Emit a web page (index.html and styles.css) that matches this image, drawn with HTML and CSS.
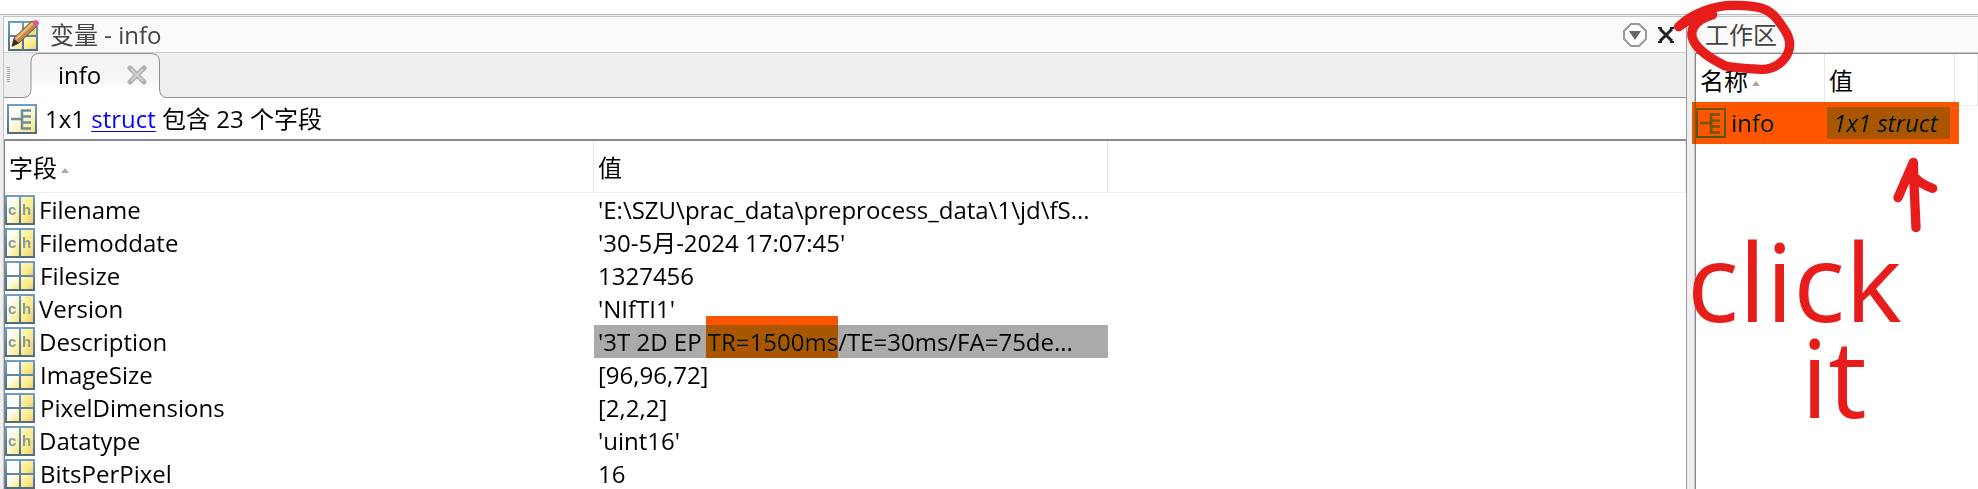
FILE: index.html
```html
<!DOCTYPE html>
<html lang="zh-CN">
<head>
<meta charset="utf-8">
<title>变量 - info</title>
<link rel="stylesheet" href="styles.css">
</head>
<body>
<svg class="defs" aria-hidden="true">
  <defs>
    <linearGradient id="edge" x1="0" y1="0" x2="0" y2="1"><stop offset="0" stop-color="#6f9fc4"/><stop offset="1" stop-color="#4f6b80"/></linearGradient>
    <linearGradient id="pale" x1="0" y1="0" x2="1" y2="1"><stop offset="0" stop-color="#ffffff"/><stop offset=".35" stop-color="#fffef0"/><stop offset="1" stop-color="#f6e67c"/></linearGradient>
    <linearGradient id="gold" x1="0" y1="0" x2="1" y2="1"><stop offset="0" stop-color="#fff9c4"/><stop offset=".6" stop-color="#fbea85"/><stop offset="1" stop-color="#e9cf80"/></linearGradient>
    <linearGradient id="tabfill" x1="0" y1="0" x2="0" y2="1"><stop offset="0" stop-color="#f3f3f6"/><stop offset=".55" stop-color="#f6f6f9"/><stop offset=".8" stop-color="#ffffff"/></linearGradient>
    <linearGradient id="wood" x1="0" y1="0" x2="1" y2="1"><stop offset="0" stop-color="#f5c98a"/><stop offset="1" stop-color="#8a5522"/></linearGradient>
    <symbol id="grid" viewBox="0 0 30 30">
      <rect width="30" height="30" fill="url(#edge)"/>
      <rect x="2" y="2" width="12" height="12" fill="#fff"/>
      <rect x="16" y="2" width="12" height="12" fill="url(#gold)"/>
      <rect x="2" y="16" width="12" height="12" fill="url(#pale)"/>
      <rect x="16" y="16" width="12" height="12" fill="url(#gold)"/>
    </symbol>
    <symbol id="char" viewBox="0 0 30 30">
      <rect width="30" height="30" fill="url(#edge)"/>
      <rect x="2" y="2" width="12" height="26" fill="url(#pale)"/>
      <rect x="16" y="2" width="12" height="26" fill="url(#gold)"/>
      <text x="3" y="20" class="icon-letter">c</text>
      <text x="17" y="20" class="icon-letter">h</text>
    </symbol>
    <symbol id="struct" viewBox="0 0 30 30">
      <rect width="30" height="30" fill="url(#edge)"/>
      <rect x="2" y="2" width="26" height="26" fill="url(#pale)"/>
      <path d="M4 15H15M24 6.500H15V24.500H24M15 12.500H24M15 18.500H24" fill="none" stroke="#6f8d9c" stroke-width="2.500"/>
    </symbol>
  </defs>
</svg>
<div class="desktop">
  <main class="variables">
    <header class="titlebar">
      <svg class="title-icon" viewBox="0 0 32 32" aria-hidden="true">
        <use href="#grid" x="0" y="2" width="30" height="30"/>
        <path d="M4 27L6 19L24 2L29 7L11 24Z" fill="url(#wood)" stroke="#7b4c25"/>
        <path d="M8 20L25 4" stroke="#f1bd7c" stroke-width="2"/>
        <path d="M4 28L6 20L11 24Z" fill="#333"/>
        <path d="M24 3L27 1Q31 1 31 5L28 8Z" fill="#d85f83"/>
      </svg>
      <h1 class="title">变量 - info</h1>
      <button class="bar-button menu" aria-label="菜单"><svg viewBox="0 0 26 26"><path d="M9 2H17L24 9V17L17 24H9L2 17V9Z" fill="#fff" stroke="#999" stroke-width="2" stroke-linejoin="round"/><path d="M7 9H19L13 18Z" fill="#666"/></svg></button>
      <button class="bar-button close" aria-label="关闭"><svg viewBox="0 0 18 18"><path d="M3 3L15 15M15 3L3 15" fill="none" stroke="#222" stroke-width="3"/><path d="M1 2H5M13 2H17M1 16H5M13 16H17" stroke="#222" stroke-width="2"/></svg></button>
    </header>
    <nav class="tabs">
      <span class="grip"></span>
      <div class="tab">
        <svg class="tab-shape" viewBox="0 0 142 46" aria-hidden="true"><path d="M0 44.500Q7 44 7 36V9Q7 .5 15 .5H127Q135.500 .5 135.500 9V36Q136 44 142 44.500V46H0Z" fill="url(#tabfill)"/><path d="M0 44.500Q7 44 7 36V9Q7 .5 15 .5H127Q135.500 .5 135.500 9V36Q136 44 142 44.500" fill="none" stroke="#909090"/></svg>
        <button class="tab-label">info</button>
        <button class="tab-close" aria-label="关闭 info"><svg viewBox="0 0 20 20"><path d="M3 3L17 17M17 3L3 17" stroke="#b0b0b0" stroke-width="5" stroke-linecap="round"/><path d="M4 4L16 16M16 4L4 16" stroke="#cfcfcf" stroke-width="2"/></svg></button>
      </div>
    </nav>
    <p class="summary"><svg class="icon"><use href="#struct"/></svg><span>1x1 <a href="#">struct</a> 包含 23 个字段</span></p>
    <div class="table-frame">
      <table class="fields">
        <colgroup><col class="col-field"><col class="col-value"><col></colgroup>
        <thead><tr><th>字段<span class="sort"></span></th><th>值</th><th></th></tr></thead>
        <tbody>
          <tr><td><div class="name"><svg class="icon"><use href="#char"/></svg>Filename</div></td><td>'E:\SZU\prac_data\preprocess_data\1\jd\fS...</td><td></td></tr>
          <tr><td><div class="name"><svg class="icon"><use href="#char"/></svg>Filemoddate</div></td><td>'30-5月-2024 17:07:45'</td><td></td></tr>
          <tr><td><div class="name numeric"><svg class="icon"><use href="#grid"/></svg>Filesize</div></td><td>1327456</td><td></td></tr>
          <tr><td><div class="name"><svg class="icon"><use href="#char"/></svg>Version</div></td><td>'NIfTI1'</td><td></td></tr>
          <tr><td><div class="name"><svg class="icon"><use href="#char"/></svg>Description</div></td><td class="selected">'3T 2D EP <span class="marked">TR=1500ms</span>/TE=30ms/FA=75de...</td><td></td></tr>
          <tr><td><div class="name numeric"><svg class="icon"><use href="#grid"/></svg>ImageSize</div></td><td>[96,96,72]</td><td></td></tr>
          <tr><td><div class="name numeric"><svg class="icon"><use href="#grid"/></svg>PixelDimensions</div></td><td>[2,2,2]</td><td></td></tr>
          <tr><td><div class="name"><svg class="icon"><use href="#char"/></svg>Datatype</div></td><td>'uint16'</td><td></td></tr>
          <tr><td><div class="name numeric"><svg class="icon"><use href="#grid"/></svg>BitsPerPixel</div></td><td>16</td><td></td></tr>
        </tbody>
      </table>
    </div>
  </main>
  <aside class="workspace">
    <header class="titlebar"><h2 class="title">工作区</h2></header>
    <div class="workspace-frame">
      <table class="vars">
        <colgroup><col class="col-var"><col class="col-content"><col></colgroup>
        <thead><tr><th>名称<span class="sort"></span></th><th>值</th><th></th></tr></thead>
        <tbody><tr><td><div class="name numeric"><svg class="icon"><use href="#struct"/></svg>info</div></td><td><span class="content">1x1 struct</span></td><td></td></tr></tbody>
      </table>
    </div>
    <div class="row-mark"></div>
    <svg class="ink ring" viewBox="0 0 372 228" aria-hidden="true"><path d="M20 80C60 40 130 15 186 16C255 15 290 25 315 57C340 90 358 115 352 145C345 180 310 210 265 208C220 205 190 204 160 198C120 178 70 150 60 110C55 75 85 55 122 44C90 43 55 55 20 80"/></svg>
    <svg class="ink arrow" viewBox="0 0 144 234" aria-hidden="true"><path d="M18 128L64 22L66 85L72 218M66 65Q88 88 122 100"/></svg>
    <p class="note note-first">click</p>
    <p class="note note-second">it</p>
  </aside>
</div>
</body>
</html>
```
FILE: styles.css
```css
* { box-sizing: border-box; }
body {
  margin: 0;
  height: 100vh;
  overflow: hidden;
  padding-top: 14px;
  background: #fff;
  color: #000;
  font: 24px/32px "Open Sans", "Noto Sans CJK SC", sans-serif;
}
button { border: 0; padding: 0; background: none; font: inherit; color: inherit; }
svg { display: block; }
.defs { position: absolute; width: 0; height: 0; }
.icon-letter { font: bold 15px "Liberation Sans", sans-serif; fill: #8a9a94; }
.icon { width: 30px; height: 30px; flex: none; }
.desktop {
  display: grid;
  grid-template-columns: minmax(0, 1fr) 284px;
  column-gap: 7px;
  height: 100%;
  padding: 1px 0 0 3px;
  border-top: 1px solid #bbb;
  background: #efefef;
}
.variables { display: flex; flex-direction: column; border: 1px solid #c4c4c4; border-bottom: 0; border-right-color: #999; }
.titlebar {
  display: flex;
  align-items: center;
  height: 36px;
  padding: 0 11px 0 4px;
  border-bottom: 1px solid #d0d0d0;
  background: #fafafa;
  color: #444;
}
.title { margin: 0; font-size: 24px; font-weight: normal; line-height: 32px; }
.title-icon { width: 32px; height: 32px; margin-right: 10px; }
.menu { margin-left: auto; margin-right: 9px; }
.menu svg { width: 26px; height: 26px; }
.close svg { width: 18px; height: 18px; }
.tabs { display: flex; align-items: center; height: 45px; border-bottom: 1px solid #909090; background: #efefef; flex: none; }
.grip { width: 3px; height: 16px; margin: 0 14px 0 3px; background: repeating-linear-gradient(#aaa 0 1px, transparent 1px 2px); }
.tab { position: relative; display: flex; align-items: center; gap: 26px; width: 142px; height: 45px; padding-left: 34px; }
.tab-shape { position: absolute; left: 0; top: 0; width: 142px; height: 46px; }
.tab-label, .tab-close { position: relative; }
.tab-close svg { width: 20px; height: 20px; }
.summary { display: flex; align-items: center; gap: 8px; height: 41px; margin: 0; padding-left: 3px; background: #fff; flex: none; }
.summary a { color: #00f; text-decoration-thickness: 1px; text-underline-offset: 3px; }
.table-frame { flex: 1; min-height: 0; overflow: hidden; border-top: 2px solid #858992; border-left: 1px solid #858992; background: #fff; }
table { width: 100%; border-collapse: separate; border-spacing: 0; table-layout: fixed; }
th, td { padding: 0 0 0 4px; font-weight: normal; text-align: left; white-space: nowrap; }
th { height: 52px; padding-top: 2px; border-right: 1px solid #e6e6e6; border-bottom: 1px solid #eee; }
td { height: 33px; }
td:first-child { padding: 0; }
.col-field { width: 589px; }
.col-value { width: 514px; }
.name { display: flex; align-items: center; gap: 4px; }
.numeric { gap: 5px; }
.sort { display: inline-block; margin-left: 4px; vertical-align: middle; border: 4px solid transparent; border-top: 0; border-bottom: 5px solid #aaa995; }
.selected { background: #aaa; }
.marked { position: relative; }
.marked::after { content: ""; position: absolute; left: -2px; right: 0; top: -9px; height: 42px; background: #f50; mix-blend-mode: darken; }
.workspace { position: relative; display: flex; flex-direction: column; border-top: 1px solid #c4c4c4; border-left: 1px solid #c4c4c4; }
.workspace .titlebar { padding-left: 10px; }
.workspace-frame { flex: 1; border-top: 1px solid #858992; border-left: 1px solid #858992; background: #fff; }
.col-var { width: 129px; }
.col-content { width: 130px; }
.vars td:nth-child(2) { padding-left: 2px; }
.content { display: block; width: 123px; padding-left: 6px; background: #aaa; font-style: italic; }
.row-mark { position: absolute; left: -3px; top: 85px; width: 267px; height: 42px; background: #f50; mix-blend-mode: darken; }
.ink { position: absolute; fill: none; stroke: #e71d1b; stroke-width: 28px; stroke-linecap: round; stroke-linejoin: round; }
.ring { left: -23px; top: -17px; width: 124px; height: 76px; }
.arrow { left: 197px; top: 138px; width: 48px; height: 78px; }
.note { position: absolute; margin: 0; color: #e71d1b; font-size: 108px; line-height: 96px; }
.note-first { left: -8px; top: 216px; }
.note-second { left: 106px; top: 312px; }
```
